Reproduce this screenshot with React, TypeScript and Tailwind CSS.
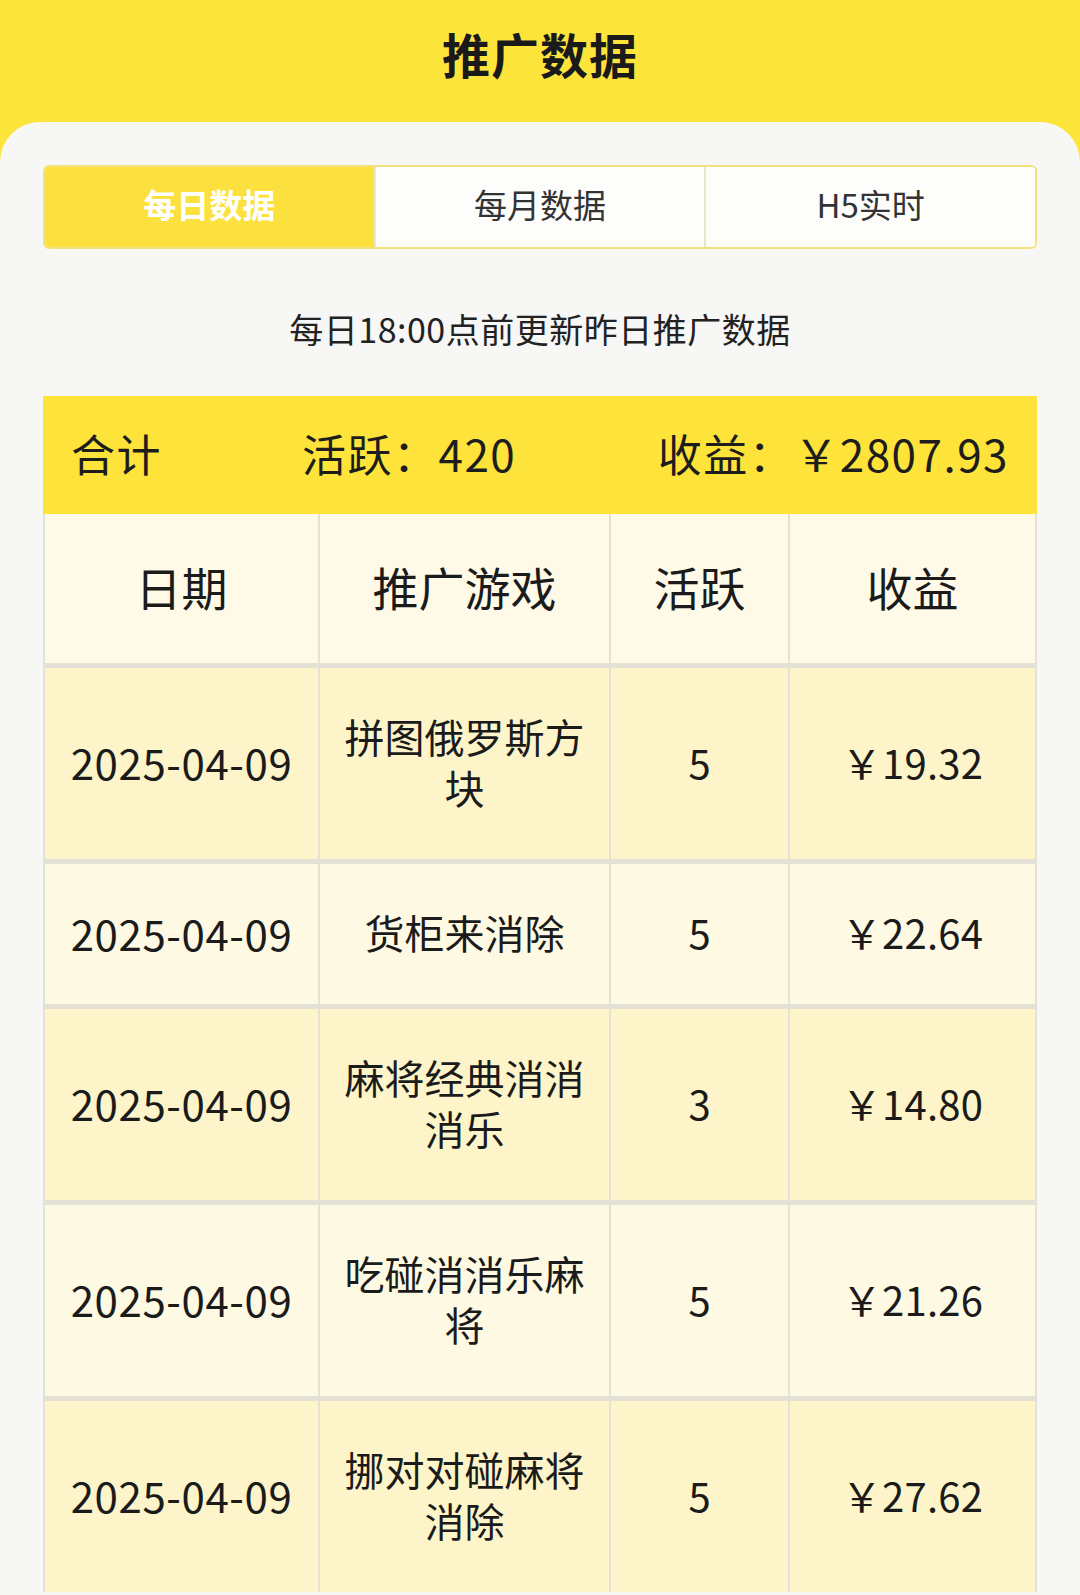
import React from "react";

type Row = {
  date: string;
  game: string;
  active: number;
  income: string;
  tall: boolean;
};

const rows: Row[] = [
  { date: "2025-04-09", game: "拼图俄罗斯方块", active: 5, income: "19.32", tall: true },
  { date: "2025-04-09", game: "货柜来消除", active: 5, income: "22.64", tall: false },
  { date: "2025-04-09", game: "麻将经典消消消乐", active: 3, income: "14.80", tall: true },
  { date: "2025-04-09", game: "吃碰消消乐麻将", active: 5, income: "21.26", tall: true },
  { date: "2025-04-09", game: "挪对对碰麻将消除", active: 5, income: "27.62", tall: true },
];

const tabs = ["每日数据", "每月数据", "H5实时"];

export default function App() {
  return (
    <div className="min-h-[1595px] bg-[#FDE43B] font-['Noto_Sans_CJK_SC','Noto_Sans',sans-serif] text-[#1b1b1b]">
      <div className="h-[122px] flex items-center justify-center pb-4">
        <h1 className="text-[48px] font-bold tracking-[1px] text-[#1a1a1a]">推广数据</h1>
      </div>

      <div className="bg-[#F7F7F6] rounded-t-[40px] px-[43px] pt-[43px] pb-10">
        {/* tabs */}
        <div className="flex h-[84px] rounded-[6px] border-2 border-[#F3E27C] overflow-hidden bg-white">
          {tabs.map((t, i) => (
            <div
              key={t}
              className={`flex-1 flex items-center justify-center text-[33px] pb-1 ${
                i === 0
                  ? "bg-[#FCE13E] text-white font-bold"
                  : "bg-[#FDFDFB] text-[#333] border-l-2 border-[#ECE6C4]"
              }`}
            >
              {t}
            </div>
          ))}
        </div>

        <div className="h-[147px] flex items-center justify-center pt-3 text-[34px] tracking-[0.5px] text-[#222]">
          每日18:00点前更新昨日推广数据
        </div>

        {/* summary */}
        <div className="h-[118px] bg-[#FDE33A] flex items-center px-[28px] pb-1 text-[44px] tracking-[1.5px] text-[#1d1d1d]">
          <div className="w-[231px]">合计</div>
          <div>活跃：420</div>
          <div className="ml-auto">收益：￥2807.93</div>
        </div>

        {/* table */}
        <div className="bg-[#E4E2D7] px-[2px] grid grid-cols-[273px_289px_177px_245px] gap-x-[2px] gap-y-[5px]">
          {["日期", "推广游戏", "活跃", "收益"].map((h) => (
            <div
              key={h}
              className="h-[149px] bg-[#FEFAE7] flex items-center justify-center pb-1 text-[46px]"
            >
              {h}
            </div>
          ))}
          {rows.map((r, i) => {
            const bg = i % 2 === 0 ? "bg-[#FDF5C9]" : "bg-[#FEF9E3]";
            const h = r.tall ? "h-[191px]" : "h-[140px]";
            return (
              <React.Fragment key={i}>
                <div className={`${bg} ${h} flex items-center justify-center pb-1 text-[42px] tracking-[0.6px]`}>
                  {r.date}
                </div>
                <div
                  className={`${bg} ${h} flex items-center justify-center text-center px-[22px] pb-1 text-[40px] leading-[51px]`}
                >
                  {r.game}
                </div>
                <div className={`${bg} ${h} flex items-center justify-center pb-1 text-[40px]`}>
                  {r.active}
                </div>
                <div className={`${bg} ${h} flex items-center justify-center pb-1 text-[40px] tracking-[0.3px]`}>
                  ￥{r.income}
                </div>
              </React.Fragment>
            );
          })}
        </div>
      </div>
    </div>
  );
}
